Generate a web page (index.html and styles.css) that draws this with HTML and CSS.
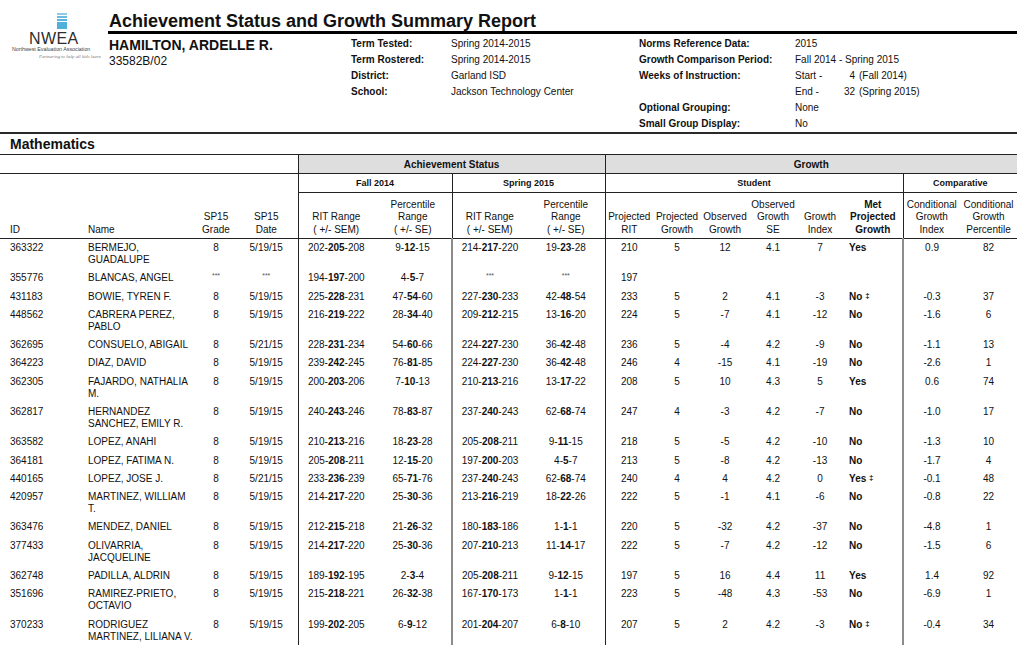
FILE: index.html
```html
<!DOCTYPE html>
<html lang="en">
<head>
<meta charset="utf-8">
<title>Achievement Status and Growth Summary Report</title>
<link rel="stylesheet" href="styles.css">
</head>
<body>
<div class="page">
  <header class="top">
    <div class="logo">
      <svg class="logo-mark" width="10" height="16" viewBox="0 0 10 16">
        <rect x="0" y="0" width="10" height="2" fill="#8fcbe7"/>
        <rect x="0" y="3" width="10" height="2" fill="#6bbbe0"/>
        <rect x="0" y="6" width="10" height="2" fill="#5cb4dc"/>
        <rect x="0" y="9" width="10" height="7" fill="#4fb0da"/>
      </svg>
      <div class="logo-word">NWEA</div>
      <div class="logo-org">Northwest Evaluation Association</div>
      <div class="logo-tag">Partnering to help all kids learn</div>
    </div>
    <div class="head-main">
      <h1 class="title">Achievement Status and Growth Summary Report</h1>
      <div class="info">
        <div class="student">
          <div class="student-name">HAMILTON, ARDELLE R.</div>
          <div class="student-id">33582B/02</div>
        </div>
        <div class="terms">
          <div class="lbl">Term Tested:</div><div class="val">Spring 2014-2015</div>
          <div class="lbl">Term Rostered:</div><div class="val">Spring 2014-2015</div>
          <div class="lbl">District:</div><div class="val">Garland ISD</div>
          <div class="lbl">School:</div><div class="val">Jackson Technology Center</div>
        </div>
        <div class="norms">
          <div class="lbl">Norms Reference Data:</div><div class="val">2015</div>
          <div class="lbl">Growth Comparison Period:</div><div class="val">Fall 2014 - Spring 2015</div>
          <div class="lbl">Weeks of Instruction:</div>
          <div class="val wk"><span>Start -</span><span class="wk-n">4</span><span>(Fall 2014)</span></div>
          <div class="lbl"></div>
          <div class="val wk"><span>End -</span><span class="wk-n">32</span><span>(Spring 2015)</span></div>
          <div class="lbl">Optional Grouping:</div><div class="val">None</div>
          <div class="lbl">Small Group Display:</div><div class="val">No</div>
        </div>
      </div>
    </div>
  </header>

  <h2 class="subject">Mathematics</h2>

  <table class="report">
    <colgroup>
      <col class="c-id"><col class="c-name"><col class="c-grade"><col class="c-date">
      <col class="c-rit"><col class="c-pct"><col class="c-rit2"><col class="c-pct">
      <col class="c-g"><col class="c-g"><col class="c-g"><col class="c-g">
      <col class="c-gi"><col class="c-met"><col class="c-cg"><col class="c-cg">
    </colgroup>
    <thead>
      <tr class="r1">
        <th colspan="4" class="blank"></th>
        <th colspan="4" class="group">Achievement Status</th>
        <th colspan="8" class="group">Growth</th>
      </tr>
      <tr class="r2">
        <th colspan="4" class="blank"></th>
        <th colspan="2" class="sub">Fall 2014</th>
        <th colspan="2" class="sub">Spring 2015</th>
        <th colspan="6" class="sub">Student</th>
        <th colspan="2" class="sub">Comparative</th>
      </tr>
      <tr class="r3">
        <th class="left">ID</th>
        <th class="left name">Name</th>
        <th>SP15<br>Grade</th>
        <th>SP15<br>Date</th>
        <th>RIT Range<br>( +/- SEM)</th>
        <th>Percentile<br>Range<br>( +/- SE)</th>
        <th>RIT Range<br>( +/- SEM)</th>
        <th>Percentile<br>Range<br>( +/- SE)</th>
        <th>Projected<br>RIT</th>
        <th>Projected<br>Growth</th>
        <th>Observed<br>Growth</th>
        <th>Observed<br>Growth<br>SE</th>
        <th>Growth<br>Index</th>
        <th class="met">Met<br>Projected<br>Growth</th>
        <th>Conditional<br>Growth<br>Index</th>
        <th>Conditional<br>Growth<br>Percentile</th>
      </tr>
    </thead>
    <tbody>
      <tr><td>363322</td><td>BERMEJO, GUADALUPE</td><td>8</td><td>5/19/15</td><td>202-<b>205</b>-208</td><td>9-<b>12</b>-15</td><td>214-<b>217</b>-220</td><td>19-<b>23</b>-28</td><td>210</td><td>5</td><td>12</td><td>4.1</td><td>7</td><td><b>Yes</b></td><td>0.9</td><td>82</td></tr>
      <tr><td>355776</td><td>BLANCAS, ANGEL</td><td><span class="na">***</span></td><td><span class="na">***</span></td><td>194-<b>197</b>-200</td><td>4-<b>5</b>-7</td><td><span class="na">***</span></td><td><span class="na">***</span></td><td>197</td><td></td><td></td><td></td><td></td><td></td><td></td><td></td></tr>
      <tr><td>431183</td><td>BOWIE, TYREN F.</td><td>8</td><td>5/19/15</td><td>225-<b>228</b>-231</td><td>47-<b>54</b>-60</td><td>227-<b>230</b>-233</td><td>42-<b>48</b>-54</td><td>233</td><td>5</td><td>2</td><td>4.1</td><td>-3</td><td><b>No</b> <span class="dag">&#8225;</span></td><td>-0.3</td><td>37</td></tr>
      <tr><td>448562</td><td>CABRERA PEREZ, PABLO</td><td>8</td><td>5/19/15</td><td>216-<b>219</b>-222</td><td>28-<b>34</b>-40</td><td>209-<b>212</b>-215</td><td>13-<b>16</b>-20</td><td>224</td><td>5</td><td>-7</td><td>4.1</td><td>-12</td><td><b>No</b></td><td>-1.6</td><td>6</td></tr>
      <tr><td>362695</td><td>CONSUELO, ABIGAIL</td><td>8</td><td>5/21/15</td><td>228-<b>231</b>-234</td><td>54-<b>60</b>-66</td><td>224-<b>227</b>-230</td><td>36-<b>42</b>-48</td><td>236</td><td>5</td><td>-4</td><td>4.2</td><td>-9</td><td><b>No</b></td><td>-1.1</td><td>13</td></tr>
      <tr><td>364223</td><td>DIAZ, DAVID</td><td>8</td><td>5/19/15</td><td>239-<b>242</b>-245</td><td>76-<b>81</b>-85</td><td>224-<b>227</b>-230</td><td>36-<b>42</b>-48</td><td>246</td><td>4</td><td>-15</td><td>4.1</td><td>-19</td><td><b>No</b></td><td>-2.6</td><td>1</td></tr>
      <tr><td>362305</td><td>FAJARDO, NATHALIA M.</td><td>8</td><td>5/19/15</td><td>200-<b>203</b>-206</td><td>7-<b>10</b>-13</td><td>210-<b>213</b>-216</td><td>13-<b>17</b>-22</td><td>208</td><td>5</td><td>10</td><td>4.3</td><td>5</td><td><b>Yes</b></td><td>0.6</td><td>74</td></tr>
      <tr><td>362817</td><td>HERNANDEZ SANCHEZ, EMILY R.</td><td>8</td><td>5/19/15</td><td>240-<b>243</b>-246</td><td>78-<b>83</b>-87</td><td>237-<b>240</b>-243</td><td>62-<b>68</b>-74</td><td>247</td><td>4</td><td>-3</td><td>4.2</td><td>-7</td><td><b>No</b></td><td>-1.0</td><td>17</td></tr>
      <tr><td>363582</td><td>LOPEZ, ANAHI</td><td>8</td><td>5/19/15</td><td>210-<b>213</b>-216</td><td>18-<b>23</b>-28</td><td>205-<b>208</b>-211</td><td>9-<b>11</b>-15</td><td>218</td><td>5</td><td>-5</td><td>4.2</td><td>-10</td><td><b>No</b></td><td>-1.3</td><td>10</td></tr>
      <tr><td>364181</td><td>LOPEZ, FATIMA N.</td><td>8</td><td>5/19/15</td><td>205-<b>208</b>-211</td><td>12-<b>15</b>-20</td><td>197-<b>200</b>-203</td><td>4-<b>5</b>-7</td><td>213</td><td>5</td><td>-8</td><td>4.2</td><td>-13</td><td><b>No</b></td><td>-1.7</td><td>4</td></tr>
      <tr><td>440165</td><td>LOPEZ, JOSE J.</td><td>8</td><td>5/21/15</td><td>233-<b>236</b>-239</td><td>65-<b>71</b>-76</td><td>237-<b>240</b>-243</td><td>62-<b>68</b>-74</td><td>240</td><td>4</td><td>4</td><td>4.2</td><td>0</td><td><b>Yes</b> <span class="dag">&#8225;</span></td><td>-0.1</td><td>48</td></tr>
      <tr><td>420957</td><td>MARTINEZ, WILLIAM T.</td><td>8</td><td>5/19/15</td><td>214-<b>217</b>-220</td><td>25-<b>30</b>-36</td><td>213-<b>216</b>-219</td><td>18-<b>22</b>-26</td><td>222</td><td>5</td><td>-1</td><td>4.1</td><td>-6</td><td><b>No</b></td><td>-0.8</td><td>22</td></tr>
      <tr><td>363476</td><td>MENDEZ, DANIEL</td><td>8</td><td>5/19/15</td><td>212-<b>215</b>-218</td><td>21-<b>26</b>-32</td><td>180-<b>183</b>-186</td><td>1-<b>1</b>-1</td><td>220</td><td>5</td><td>-32</td><td>4.2</td><td>-37</td><td><b>No</b></td><td>-4.8</td><td>1</td></tr>
      <tr><td>377433</td><td>OLIVARRIA, JACQUELINE</td><td>8</td><td>5/19/15</td><td>214-<b>217</b>-220</td><td>25-<b>30</b>-36</td><td>207-<b>210</b>-213</td><td>11-<b>14</b>-17</td><td>222</td><td>5</td><td>-7</td><td>4.2</td><td>-12</td><td><b>No</b></td><td>-1.5</td><td>6</td></tr>
      <tr><td>362748</td><td>PADILLA, ALDRIN</td><td>8</td><td>5/19/15</td><td>189-<b>192</b>-195</td><td>2-<b>3</b>-4</td><td>205-<b>208</b>-211</td><td>9-<b>12</b>-15</td><td>197</td><td>5</td><td>16</td><td>4.4</td><td>11</td><td><b>Yes</b></td><td>1.4</td><td>92</td></tr>
      <tr><td>351696</td><td>RAMIREZ-PRIETO, OCTAVIO</td><td>8</td><td>5/19/15</td><td>215-<b>218</b>-221</td><td>26-<b>32</b>-38</td><td>167-<b>170</b>-173</td><td>1-<b>1</b>-1</td><td>223</td><td>5</td><td>-48</td><td>4.3</td><td>-53</td><td><b>No</b></td><td>-6.9</td><td>1</td></tr>
      <tr><td>370233</td><td>RODRIGUEZ MARTINEZ, LILIANA V.</td><td>8</td><td>5/19/15</td><td>199-<b>202</b>-205</td><td>6-<b>9</b>-12</td><td>201-<b>204</b>-207</td><td>6-<b>8</b>-10</td><td>207</td><td>5</td><td>2</td><td>4.2</td><td>-3</td><td><b>No</b> <span class="dag">&#8225;</span></td><td>-0.4</td><td>34</td></tr>
    </tbody>
  </table>
</div>
</body>
</html>
```

FILE: styles.css
```css
html, body {
  margin: 0;
  padding: 0;
  background: #ffffff;
}

body {
  font-family: "Liberation Sans", Arial, sans-serif;
  color: #111111;
}

.page {
  width: 1017px;
}

/* ---------- header ---------- */
.top {
  display: flex;
  height: 132px;
  border-bottom: 2px solid #2a2a2a;
}

.logo {
  width: 108px;
  flex: none;
  display: flex;
  flex-direction: column;
  align-items: flex-start;
  padding-top: 13px;
  box-sizing: border-box;
}

.logo-mark {
  display: block;
  margin-left: 57px;
}

.logo-word {
  margin-left: 29px;
  margin-top: 2.5px;
  font-size: 16px;
  line-height: 13px;
  color: #2e2e2e;
  letter-spacing: 0.4px;
}

.logo-org {
  margin-left: 12px;
  margin-top: 1.5px;
  font-size: 5.3px;
  line-height: 6px;
  color: #444444;
  white-space: nowrap;
}

.logo-tag {
  margin-left: 39px;
  margin-top: 2px;
  font-family: "Liberation Serif", serif;
  font-style: italic;
  font-size: 4.8px;
  line-height: 6px;
  color: #777777;
  white-space: nowrap;
}

.head-main {
  flex: 1;
  min-width: 0;
}

.title {
  margin: 0;
  padding: 11px 0 0 1px;
  font-size: 18px;
  line-height: 20px;
  font-weight: bold;
  border-bottom: 3px solid #000000;
}

.info {
  display: flex;
  padding-top: 2px;
  font-size: 10px;
  line-height: 16px;
}

.student {
  width: 243px;
  flex: none;
  padding-left: 1px;
  box-sizing: border-box;
}

.student-name {
  font-size: 14px;
  line-height: 18px;
  font-weight: bold;
}

.student-id {
  font-size: 12px;
  line-height: 14px;
}

.terms {
  width: 288px;
  flex: none;
  display: grid;
  grid-template-columns: 100px auto;
  align-content: start;
}

.norms {
  flex: 1;
  display: grid;
  grid-template-columns: 156px auto;
  align-content: start;
}

.lbl {
  font-weight: bold;
  height: 16px;
}

.wk {
  display: grid;
  grid-template-columns: 44px 12px auto;
  column-gap: 4px;
}

.wk-n {
  text-align: right;
}

/* ---------- subject ---------- */
.subject {
  margin: 0;
  padding-left: 10px;
  font-size: 14px;
  line-height: 20px;
  font-weight: bold;
}

/* ---------- table ---------- */
.report {
  width: 1017px;
  table-layout: fixed;
  border-collapse: collapse;
  font-size: 10px;
  border-top: 1px solid #222222;
}

.c-id { width: 85px; }
.c-name { width: 112px; }
.c-grade { width: 38px; }
.c-date { width: 63px; }
.c-rit { width: 76px; }
.c-pct { width: 78px; }
.c-rit2 { width: 75px; }
.c-g { width: 48px; }
.c-gi { width: 46px; }
.c-met { width: 60px; }
.c-cg { width: 57px; }

.report th,
.report td {
  padding: 0;
}

.report th {
  font-weight: normal;
}

.r1 th {
  height: 18px;
  border-bottom: 1px solid #222222;
  font-weight: bold;
  font-size: 10px;
}

.r1 .group {
  background: #dedede;
  border-left: 1px solid #222222;
}

.r2 th {
  height: 18px;
  font-weight: bold;
  font-size: 9px;
}

.r2 .sub {
  border-left: 1px solid #222222;
  border-bottom: 1px solid #222222;
}

.r3 th {
  height: 43px;
  vertical-align: bottom;
  line-height: 12.5px;
  padding-bottom: 2px;
  border-bottom: 1px solid #222222;
}

.r3 th.left {
  text-align: left;
  padding-left: 10px;
}

.r3 th.name {
  padding-left: 3px;
}

.r3 th.met {
  font-weight: bold;
}

.r3 th:nth-child(5),
.r3 th:nth-child(7),
.r3 th:nth-child(9),
.r3 th:nth-child(15) {
  border-left: 1px solid #222222;
}

.report td {
  padding: 3px 0;
  line-height: 12.2px;
  text-align: center;
  vertical-align: top;
}

.report td:nth-child(1) {
  text-align: left;
  padding-left: 10px;
}

.report td:nth-child(2) {
  text-align: left;
  padding-left: 3px;
  padding-right: 3px;
}

.report td:nth-child(14) {
  text-align: left;
  padding-left: 6px;
}

.report td:nth-child(5),
.report td:nth-child(9) {
  border-left: 1px solid #222222;
}

.report td:nth-child(7),
.report td:nth-child(15) {
  border-left: 2px solid #8c8c8c;
}

.na {
  font-size: 7px;
  line-height: 1;
  color: #555555;
  vertical-align: top;
}

.dag {
  font-size: 8px;
  line-height: 1;
  font-weight: bold;
  vertical-align: 2px;
}
```
